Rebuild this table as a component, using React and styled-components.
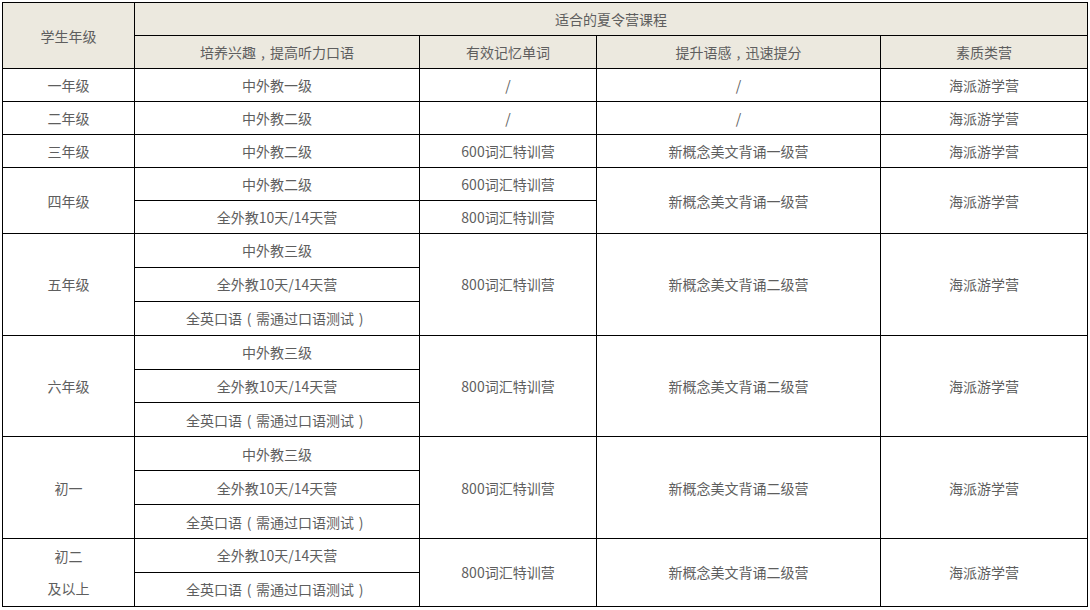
import React from "react";
import styled, { createGlobalStyle } from "styled-components";

const Global = createGlobalStyle`
  html, body { margin: 0; padding: 0; background: #fff; }
  body { font-family: "Noto Sans CJK SC", "Microsoft YaHei", sans-serif; }
`;

const Page = styled.div`
  padding: 2px 0 0 2px;
`;

const Table = styled.table`
  border-collapse: collapse;
  table-layout: fixed;
  width: 1085px;
  font-size: 14px;
  color: #5e5e5e;
`;

const HeadRow = styled.tr`
  height: 33px;
`;

const HeadCell = styled.th`
  background: #ece9df;
  font-weight: normal;
  border: 1px solid #000;
  padding: 0;
  text-align: center;
  vertical-align: middle;
  line-height: 20px;
`;

const Row = styled.tr`
  height: ${(p) => (p.$tall ? 33.9 : 33)}px;
`;

const Cell = styled.td`
  border: 1px solid #000;
  padding: 0;
  text-align: center;
  vertical-align: middle;
  line-height: ${(p) => (p.$lh ? p.$lh : 20)}px;
`;

const Punct = styled.span`
  display: inline-block;
  width: 1em;
  text-align: center;
`;

const cols = [132, 285, 177, 284, 207];

const camp = "海派游学营";

const render = (text) => {
  const parts = [];
  let buf = "";
  const map = { "，": ",", "（": "(", "）": ")" };
  [...text].forEach((ch, i) => {
    if (map[ch]) {
      if (buf) parts.push(buf);
      buf = "";
      parts.push(<Punct key={i}>{map[ch]}</Punct>);
    } else buf += ch;
  });
  if (buf) parts.push(buf);
  return parts;
};

const oral = "全英口语（需通过口语测试）";
const full = "全外教10天/14天营";

const data = [
  { grade: ["一年级"], subs: ["中外教一级"], c3: ["/"], c4: "/", c5: camp },
  { grade: ["二年级"], subs: ["中外教二级"], c3: ["/"], c4: "/", c5: camp },
  { grade: ["三年级"], subs: ["中外教二级"], c3: ["600词汇特训营"], c4: "新概念美文背诵一级营", c5: camp },
  {
    grade: ["四年级"],
    subs: ["中外教二级", full],
    c3: ["600词汇特训营", "800词汇特训营"],
    c4: "新概念美文背诵一级营",
    c5: camp,
  },
  { grade: ["五年级"], subs: ["中外教三级", full, oral], c3: ["800词汇特训营"], c4: "新概念美文背诵二级营", c5: camp },
  { grade: ["六年级"], subs: ["中外教三级", full, oral], c3: ["800词汇特训营"], c4: "新概念美文背诵二级营", c5: camp },
  { grade: ["初一"], subs: ["中外教三级", full, oral], c3: ["800词汇特训营"], c4: "新概念美文背诵二级营", c5: camp },
  { grade: ["初二", "及以上"], subs: [full, oral], c3: ["800词汇特训营"], c4: "新概念美文背诵二级营", c5: camp },
];

export default function App() {
  const rows = [];
  let idx = 0;
  data.forEach((g, gi) => {
    const n = g.subs.length;
    const perRowC3 = g.c3.length === n;
    g.subs.forEach((s, si) => {
      rows.push(
        <Row key={`${gi}-${si}`} $tall={idx >= 5}>
          {si === 0 && (
            <Cell rowSpan={n} $lh={g.grade.length > 1 ? 32 : 20}>
              {g.grade.map((t, i) => (
                <React.Fragment key={i}>
                  {i > 0 && <br />}
                  {t}
                </React.Fragment>
              ))}
            </Cell>
          )}
          <Cell>{render(s)}</Cell>
          {perRowC3 ? <Cell>{g.c3[si]}</Cell> : si === 0 && <Cell rowSpan={n}>{g.c3[0]}</Cell>}
          {si === 0 && <Cell rowSpan={n}>{g.c4}</Cell>}
          {si === 0 && <Cell rowSpan={n}>{g.c5}</Cell>}
        </Row>
      );
      idx += 1;
    });
  });

  return (
    <Page>
      <Global />
      <Table>
        <colgroup>
          {cols.map((w, i) => (
            <col key={i} style={{ width: w }} />
          ))}
        </colgroup>
        <thead>
          <HeadRow>
            <HeadCell rowSpan={2}>学生年级</HeadCell>
            <HeadCell colSpan={4}>适合的夏令营课程</HeadCell>
          </HeadRow>
          <HeadRow>
            <HeadCell>{render("培养兴趣，提高听力口语")}</HeadCell>
            <HeadCell>有效记忆单词</HeadCell>
            <HeadCell>{render("提升语感，迅速提分")}</HeadCell>
            <HeadCell>素质类营</HeadCell>
          </HeadRow>
        </thead>
        <tbody>{rows}</tbody>
      </Table>
    </Page>
  );
}
